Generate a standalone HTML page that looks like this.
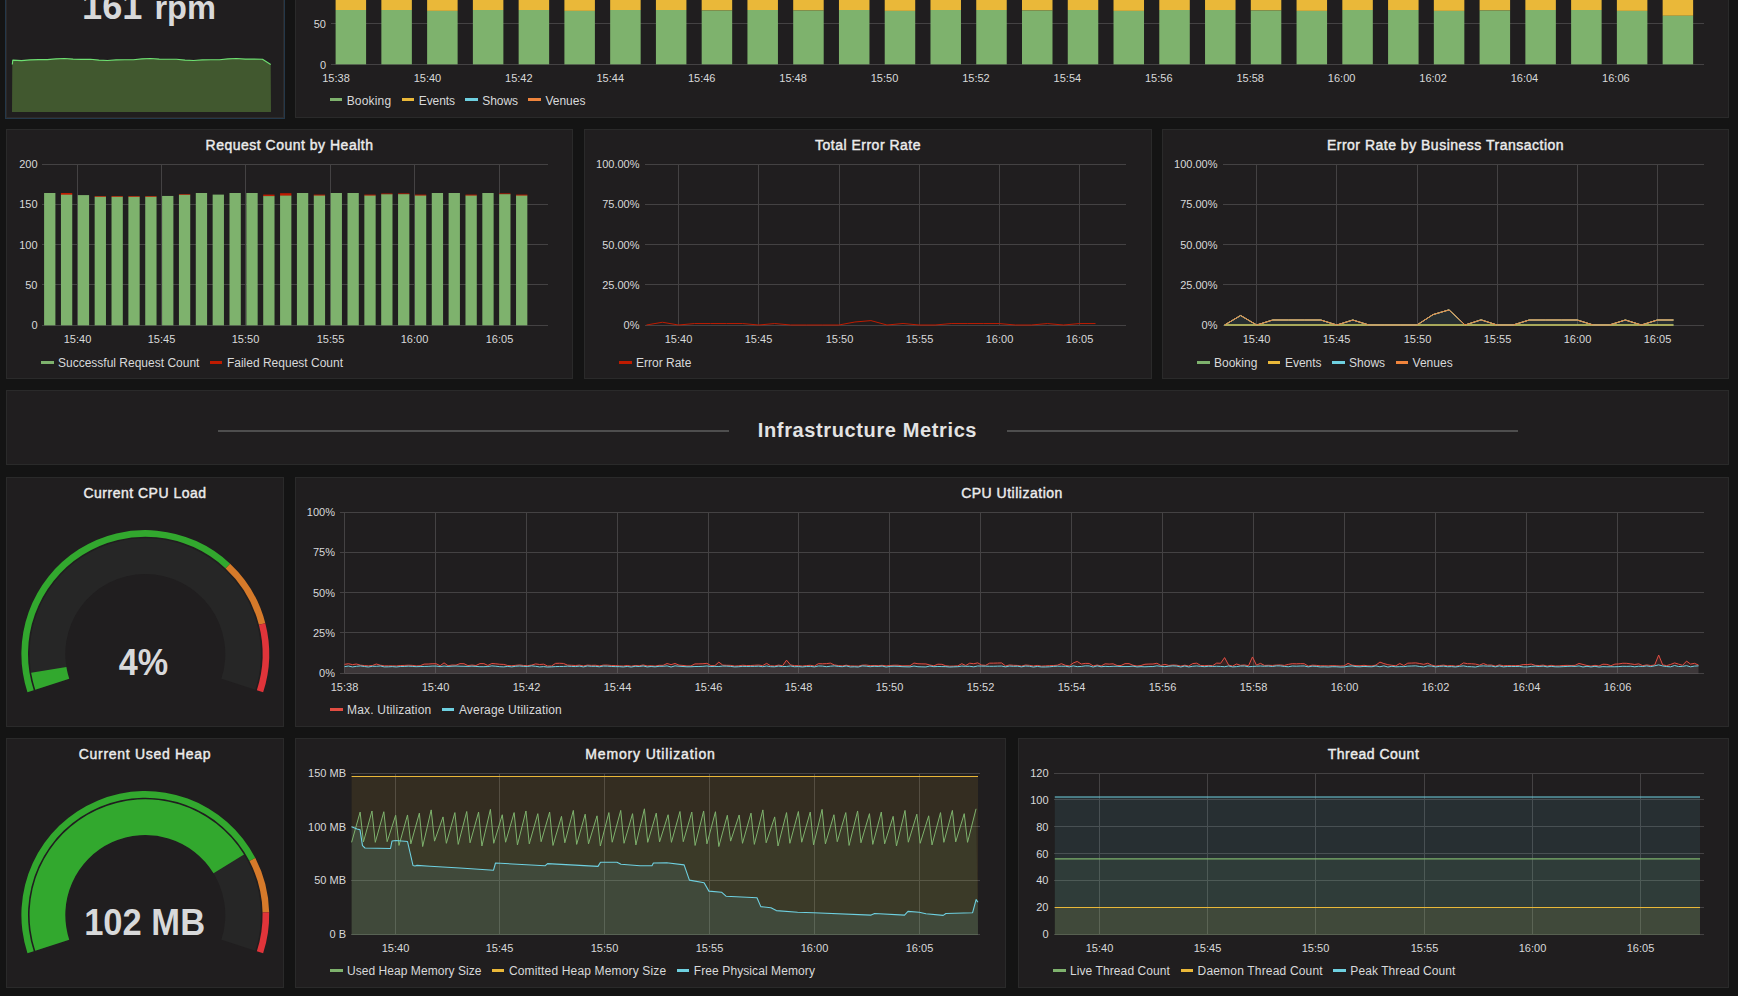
<!DOCTYPE html>
<html lang="en"><head><meta charset="utf-8"><title>Application Dashboard</title>
<style>
html,body{margin:0;padding:0;background:#141414;}
body{width:1738px;height:996px;overflow:hidden;position:relative;font-family:"Liberation Sans", Arial, sans-serif;color:#d8d9da;font-size:12px;}
.panel{position:absolute;box-sizing:border-box;background:#201e1f;border:1px solid #2a2a2a;}
.panel.hl{box-shadow:0 0 0 1px #24384a;border-color:#2d2a2a;}
.ptitle{position:absolute;left:0;right:0;top:7px;height:18px;line-height:18px;text-align:center;font-size:14px;font-weight:normal;-webkit-text-stroke:0.42px #ececec;color:#ececec;white-space:nowrap;}
svg.chart{position:absolute;left:-1px;top:-1px;overflow:hidden;}
.legend{position:absolute;white-space:nowrap;height:16px;line-height:16px;font-size:12px;color:#d8d9da;}
.legend .li{display:inline-block;margin-right:10.5px;}
.legend .li i{display:inline-block;width:12.5px;height:3px;margin-right:4.5px;vertical-align:middle;position:relative;top:-1.5px;}
.bigval{position:absolute;white-space:nowrap;font-weight:bold;color:#d8d9da;line-height:40px;height:40px;}
.bigval .v{font-size:36.2px;}
.bigval .u{font-size:32.6px;margin-left:12px;}
.infra{position:absolute;left:0;top:0;right:0;bottom:0;}
.infra h3{position:absolute;left:0;right:0;top:24px;margin:0;height:30px;line-height:30px;text-align:center;font-size:20px;letter-spacing:0.62px;font-weight:bold;color:#e3e3e3;}
.infra .hr{position:absolute;top:39px;height:2px;background:#4e4e4e;}

</style></head><body>
<div class="panel hl" style="left:6px;top:-132px;width:278px;height:250px">
<div class="ptitle" style="top:6px;letter-spacing:0.5px">Calls per Minute</div>
<svg class="chart" width="278" height="250" viewBox="6 -132 278 250" font-family='"Liberation Sans", Arial, sans-serif'>
<path d="M12.3,64.5 L12.8,60.09 L21.41,60.58 L30.02,59.92 L38.63,59.59 L47.24,59.66 L55.85,58.91 L64.46,58.43 L73.07,59.09 L81.68,59.36 L90.29,59.3 L98.9,60.1 L107.51,60.55 L116.12,59.91 L124.73,59.69 L133.34,59.73 L141.96,58.9 L150.57,58.46 L159.18,59.09 L167.79,59.26 L176.4,59.24 L185.01,60.11 L193.62,60.52 L202.23,59.9 L210.84,59.79 L219.45,59.8 L228.06,58.89 L236.67,58.51 L245.28,59.1 L253.89,59.15 L262.5,59.18 L270.7,64.5 L271,112 L12,112 Z" fill="#41582f"/>
<path d="M12.3,64.5 L12.8,60.09 L21.41,60.58 L30.02,59.92 L38.63,59.59 L47.24,59.66 L55.85,58.91 L64.46,58.43 L73.07,59.09 L81.68,59.36 L90.29,59.3 L98.9,60.1 L107.51,60.55 L116.12,59.91 L124.73,59.69 L133.34,59.73 L141.96,58.9 L150.57,58.46 L159.18,59.09 L167.79,59.26 L176.4,59.24 L185.01,60.11 L193.62,60.52 L202.23,59.9 L210.84,59.79 L219.45,59.8 L228.06,58.89 L236.67,58.51 L245.28,59.1 L253.89,59.15 L262.5,59.18 L270.7,64.5" fill="none" stroke="#6ee072" stroke-width="1.1" stroke-linejoin="round"/>
</svg>
<div class="bigval" style="left:75px;top:117.5px"><span class="v">161</span><span class="u">rpm</span></div>
</div>
<div class="panel " style="left:295px;top:-132px;width:1434px;height:250px">
<div class="ptitle" style="top:6px;letter-spacing:0.5px">Calls per Minute by Business Transaction</div>
<svg class="chart" width="1434" height="250" viewBox="295 -132 1434 250" font-family='"Liberation Sans", Arial, sans-serif'>
<rect x="331" y="23" width="1373" height="1" fill="#444243"/>
<rect x="331" y="64" width="1373" height="1" fill="#444243"/>
<rect x="335.6" y="-5" width="30.5" height="15" fill="#eab839"/>
<rect x="335.6" y="10" width="30.5" height="54.3" fill="#7eb26d"/>
<rect x="381.36" y="-5" width="30.5" height="15" fill="#eab839"/>
<rect x="381.36" y="10" width="30.5" height="54.3" fill="#7eb26d"/>
<rect x="427.12" y="-5" width="30.5" height="15.9" fill="#eab839"/>
<rect x="427.12" y="10.9" width="30.5" height="53.4" fill="#7eb26d"/>
<rect x="472.88" y="-5" width="30.5" height="15" fill="#eab839"/>
<rect x="472.88" y="10" width="30.5" height="54.3" fill="#7eb26d"/>
<rect x="518.64" y="-5" width="30.5" height="15" fill="#eab839"/>
<rect x="518.64" y="10" width="30.5" height="54.3" fill="#7eb26d"/>
<rect x="564.4" y="-5" width="30.5" height="15.9" fill="#eab839"/>
<rect x="564.4" y="10.9" width="30.5" height="53.4" fill="#7eb26d"/>
<rect x="610.16" y="-5" width="30.5" height="15" fill="#eab839"/>
<rect x="610.16" y="10" width="30.5" height="54.3" fill="#7eb26d"/>
<rect x="655.92" y="-5" width="30.5" height="15" fill="#eab839"/>
<rect x="655.92" y="10" width="30.5" height="54.3" fill="#7eb26d"/>
<rect x="701.68" y="-5" width="30.5" height="15.5" fill="#eab839"/>
<rect x="701.68" y="10.5" width="30.5" height="53.8" fill="#7eb26d"/>
<rect x="747.44" y="-5" width="30.5" height="15" fill="#eab839"/>
<rect x="747.44" y="10" width="30.5" height="54.3" fill="#7eb26d"/>
<rect x="793.2" y="-5" width="30.5" height="15.5" fill="#eab839"/>
<rect x="793.2" y="10.5" width="30.5" height="53.8" fill="#7eb26d"/>
<rect x="838.96" y="-5" width="30.5" height="15" fill="#eab839"/>
<rect x="838.96" y="10" width="30.5" height="54.3" fill="#7eb26d"/>
<rect x="884.72" y="-5" width="30.5" height="15.9" fill="#eab839"/>
<rect x="884.72" y="10.9" width="30.5" height="53.4" fill="#7eb26d"/>
<rect x="930.48" y="-5" width="30.5" height="15" fill="#eab839"/>
<rect x="930.48" y="10" width="30.5" height="54.3" fill="#7eb26d"/>
<rect x="976.24" y="-5" width="30.5" height="15" fill="#eab839"/>
<rect x="976.24" y="10" width="30.5" height="54.3" fill="#7eb26d"/>
<rect x="1022" y="-5" width="30.5" height="15.5" fill="#eab839"/>
<rect x="1022" y="10.5" width="30.5" height="53.8" fill="#7eb26d"/>
<rect x="1067.76" y="-5" width="30.5" height="15" fill="#eab839"/>
<rect x="1067.76" y="10" width="30.5" height="54.3" fill="#7eb26d"/>
<rect x="1113.52" y="-5" width="30.5" height="15.9" fill="#eab839"/>
<rect x="1113.52" y="10.9" width="30.5" height="53.4" fill="#7eb26d"/>
<rect x="1159.28" y="-5" width="30.5" height="15" fill="#eab839"/>
<rect x="1159.28" y="10" width="30.5" height="54.3" fill="#7eb26d"/>
<rect x="1205.04" y="-5" width="30.5" height="15" fill="#eab839"/>
<rect x="1205.04" y="10" width="30.5" height="54.3" fill="#7eb26d"/>
<rect x="1250.8" y="-5" width="30.5" height="15.5" fill="#eab839"/>
<rect x="1250.8" y="10.5" width="30.5" height="53.8" fill="#7eb26d"/>
<rect x="1296.56" y="-5" width="30.5" height="15.9" fill="#eab839"/>
<rect x="1296.56" y="10.9" width="30.5" height="53.4" fill="#7eb26d"/>
<rect x="1342.32" y="-5" width="30.5" height="15" fill="#eab839"/>
<rect x="1342.32" y="10" width="30.5" height="54.3" fill="#7eb26d"/>
<rect x="1388.08" y="-5" width="30.5" height="15" fill="#eab839"/>
<rect x="1388.08" y="10" width="30.5" height="54.3" fill="#7eb26d"/>
<rect x="1433.84" y="-5" width="30.5" height="15.9" fill="#eab839"/>
<rect x="1433.84" y="10.9" width="30.5" height="53.4" fill="#7eb26d"/>
<rect x="1479.6" y="-5" width="30.5" height="15.5" fill="#eab839"/>
<rect x="1479.6" y="10.5" width="30.5" height="53.8" fill="#7eb26d"/>
<rect x="1525.36" y="-5" width="30.5" height="15" fill="#eab839"/>
<rect x="1525.36" y="10" width="30.5" height="54.3" fill="#7eb26d"/>
<rect x="1571.12" y="-5" width="30.5" height="15" fill="#eab839"/>
<rect x="1571.12" y="10" width="30.5" height="54.3" fill="#7eb26d"/>
<rect x="1616.88" y="-5" width="30.5" height="15.9" fill="#eab839"/>
<rect x="1616.88" y="10.9" width="30.5" height="53.4" fill="#7eb26d"/>
<rect x="1662.64" y="-5" width="30.5" height="20.8" fill="#eab839"/>
<rect x="1662.64" y="15.8" width="30.5" height="48.5" fill="#7eb26d"/>
<text x="326" y="28.14" text-anchor="end" font-size="11" fill="#d8d9da" font-weight="normal" >50</text>
<text x="326" y="68.64" text-anchor="end" font-size="11" fill="#d8d9da" font-weight="normal" >0</text>
<text x="336" y="82.24" text-anchor="middle" font-size="11" fill="#d8d9da" font-weight="normal" >15:38</text>
<text x="427.42" y="82.24" text-anchor="middle" font-size="11" fill="#d8d9da" font-weight="normal" >15:40</text>
<text x="518.84" y="82.24" text-anchor="middle" font-size="11" fill="#d8d9da" font-weight="normal" >15:42</text>
<text x="610.26" y="82.24" text-anchor="middle" font-size="11" fill="#d8d9da" font-weight="normal" >15:44</text>
<text x="701.68" y="82.24" text-anchor="middle" font-size="11" fill="#d8d9da" font-weight="normal" >15:46</text>
<text x="793.1" y="82.24" text-anchor="middle" font-size="11" fill="#d8d9da" font-weight="normal" >15:48</text>
<text x="884.52" y="82.24" text-anchor="middle" font-size="11" fill="#d8d9da" font-weight="normal" >15:50</text>
<text x="975.94" y="82.24" text-anchor="middle" font-size="11" fill="#d8d9da" font-weight="normal" >15:52</text>
<text x="1067.36" y="82.24" text-anchor="middle" font-size="11" fill="#d8d9da" font-weight="normal" >15:54</text>
<text x="1158.78" y="82.24" text-anchor="middle" font-size="11" fill="#d8d9da" font-weight="normal" >15:56</text>
<text x="1250.2" y="82.24" text-anchor="middle" font-size="11" fill="#d8d9da" font-weight="normal" >15:58</text>
<text x="1341.62" y="82.24" text-anchor="middle" font-size="11" fill="#d8d9da" font-weight="normal" >16:00</text>
<text x="1433.04" y="82.24" text-anchor="middle" font-size="11" fill="#d8d9da" font-weight="normal" >16:02</text>
<text x="1524.46" y="82.24" text-anchor="middle" font-size="11" fill="#d8d9da" font-weight="normal" >16:04</text>
<text x="1615.88" y="82.24" text-anchor="middle" font-size="11" fill="#d8d9da" font-weight="normal" >16:06</text>
</svg>
<div class="legend" style="left:33.7px;top:223.5px"><span class="li" style="letter-spacing:0.17px"><i style="background:#7eb26d"></i>Booking</span><span class="li" style="letter-spacing:-0.1px"><i style="background:#eab839"></i>Events</span><span class="li" style="letter-spacing:-0.1px"><i style="background:#6ed0e0"></i>Shows</span><span class="li"><i style="background:#ef843c"></i>Venues</span></div>
</div>
<div class="panel " style="left:6px;top:129px;width:567px;height:250px">
<div class="ptitle" style="top:6px;letter-spacing:0.5px">Request Count by Health</div>
<svg class="chart" width="567" height="250" viewBox="6 129 567 250" font-family='"Liberation Sans", Arial, sans-serif'>
<rect x="42" y="164" width="506" height="1" fill="#444243"/>
<rect x="42" y="204" width="506" height="1" fill="#444243"/>
<rect x="42" y="244" width="506" height="1" fill="#444243"/>
<rect x="42" y="284" width="506" height="1" fill="#444243"/>
<rect x="42" y="325" width="506" height="1" fill="#444243"/>
<rect x="77" y="164" width="1" height="161" fill="#444243"/>
<rect x="161" y="164" width="1" height="161" fill="#444243"/>
<rect x="245" y="164" width="1" height="161" fill="#444243"/>
<rect x="330" y="164" width="1" height="161" fill="#444243"/>
<rect x="414" y="164" width="1" height="161" fill="#444243"/>
<rect x="499" y="164" width="1" height="161" fill="#444243"/>
<rect x="44.1" y="193" width="11.3" height="132.3" fill="#7eb26d"/>
<rect x="60.95" y="193" width="11.3" height="2" fill="#bf1b00"/>
<rect x="60.95" y="194.7" width="11.3" height="130.6" fill="#7eb26d"/>
<rect x="77.81" y="195.1" width="11.3" height="130.2" fill="#7eb26d"/>
<rect x="94.66" y="196.1" width="11.3" height="1" fill="#bf1b00"/>
<rect x="94.66" y="196.8" width="11.3" height="128.5" fill="#7eb26d"/>
<rect x="111.52" y="196.1" width="11.3" height="1" fill="#bf1b00"/>
<rect x="111.52" y="196.8" width="11.3" height="128.5" fill="#7eb26d"/>
<rect x="128.38" y="196.1" width="11.3" height="1" fill="#bf1b00"/>
<rect x="128.38" y="196.8" width="11.3" height="128.5" fill="#7eb26d"/>
<rect x="145.23" y="196.1" width="11.3" height="1" fill="#bf1b00"/>
<rect x="145.23" y="196.8" width="11.3" height="128.5" fill="#7eb26d"/>
<rect x="162.09" y="195.95" width="11.3" height="129.35" fill="#7eb26d"/>
<rect x="178.94" y="194.2" width="11.3" height="0.9" fill="#bf1b00"/>
<rect x="178.94" y="194.8" width="11.3" height="130.5" fill="#7eb26d"/>
<rect x="195.79" y="193" width="11.3" height="132.3" fill="#7eb26d"/>
<rect x="212.65" y="194.6" width="11.3" height="130.7" fill="#7eb26d"/>
<rect x="229.5" y="193" width="11.3" height="132.3" fill="#7eb26d"/>
<rect x="246.36" y="193" width="11.3" height="132.3" fill="#7eb26d"/>
<rect x="263.22" y="194.6" width="11.3" height="1.8" fill="#bf1b00"/>
<rect x="263.22" y="196.1" width="11.3" height="129.2" fill="#7eb26d"/>
<rect x="280.07" y="193.2" width="11.3" height="2.7" fill="#bf1b00"/>
<rect x="280.07" y="195.6" width="11.3" height="129.7" fill="#7eb26d"/>
<rect x="296.93" y="193" width="11.3" height="132.3" fill="#7eb26d"/>
<rect x="313.78" y="194.6" width="11.3" height="1.3" fill="#bf1b00"/>
<rect x="313.78" y="195.6" width="11.3" height="129.7" fill="#7eb26d"/>
<rect x="330.64" y="193" width="11.3" height="132.3" fill="#7eb26d"/>
<rect x="347.49" y="193" width="11.3" height="132.3" fill="#7eb26d"/>
<rect x="364.35" y="194.6" width="11.3" height="1.3" fill="#bf1b00"/>
<rect x="364.35" y="195.6" width="11.3" height="129.7" fill="#7eb26d"/>
<rect x="381.2" y="193.5" width="11.3" height="1.1" fill="#bf1b00"/>
<rect x="381.2" y="194.3" width="11.3" height="131" fill="#7eb26d"/>
<rect x="398.06" y="193.4" width="11.3" height="1.1" fill="#bf1b00"/>
<rect x="398.06" y="194.2" width="11.3" height="131.1" fill="#7eb26d"/>
<rect x="414.91" y="194.6" width="11.3" height="1.3" fill="#bf1b00"/>
<rect x="414.91" y="195.6" width="11.3" height="129.7" fill="#7eb26d"/>
<rect x="431.77" y="193" width="11.3" height="132.3" fill="#7eb26d"/>
<rect x="448.62" y="193" width="11.3" height="132.3" fill="#7eb26d"/>
<rect x="465.48" y="194.6" width="11.3" height="1.3" fill="#bf1b00"/>
<rect x="465.48" y="195.6" width="11.3" height="129.7" fill="#7eb26d"/>
<rect x="482.33" y="193" width="11.3" height="132.3" fill="#7eb26d"/>
<rect x="499.19" y="193.4" width="11.3" height="1.1" fill="#bf1b00"/>
<rect x="499.19" y="194.2" width="11.3" height="131.1" fill="#7eb26d"/>
<rect x="516.04" y="194.6" width="11.3" height="1.3" fill="#bf1b00"/>
<rect x="516.04" y="195.6" width="11.3" height="129.7" fill="#7eb26d"/>
<text x="37.5" y="168.04" text-anchor="end" font-size="11" fill="#d8d9da" font-weight="normal" >200</text>
<text x="37.5" y="208.29" text-anchor="end" font-size="11" fill="#d8d9da" font-weight="normal" >150</text>
<text x="37.5" y="248.54" text-anchor="end" font-size="11" fill="#d8d9da" font-weight="normal" >100</text>
<text x="37.5" y="288.79" text-anchor="end" font-size="11" fill="#d8d9da" font-weight="normal" >50</text>
<text x="37.5" y="329.04" text-anchor="end" font-size="11" fill="#d8d9da" font-weight="normal" >0</text>
<text x="77.5" y="343.44" text-anchor="middle" font-size="11" fill="#d8d9da" font-weight="normal" >15:40</text>
<text x="161.5" y="343.44" text-anchor="middle" font-size="11" fill="#d8d9da" font-weight="normal" >15:45</text>
<text x="245.5" y="343.44" text-anchor="middle" font-size="11" fill="#d8d9da" font-weight="normal" >15:50</text>
<text x="330.5" y="343.44" text-anchor="middle" font-size="11" fill="#d8d9da" font-weight="normal" >15:55</text>
<text x="414.5" y="343.44" text-anchor="middle" font-size="11" fill="#d8d9da" font-weight="normal" >16:00</text>
<text x="499.5" y="343.44" text-anchor="middle" font-size="11" fill="#d8d9da" font-weight="normal" >16:05</text>
</svg>
<div class="legend" style="left:34px;top:225px"><span class="li"><i style="background:#7eb26d"></i>Successful Request Count</span><span class="li"><i style="background:#bf1b00"></i>Failed Request Count</span></div>
</div>
<div class="panel " style="left:584px;top:129px;width:568px;height:250px">
<div class="ptitle" style="top:6px;letter-spacing:0.5px">Total Error Rate</div>
<svg class="chart" width="568" height="250" viewBox="584 129 568 250" font-family='"Liberation Sans", Arial, sans-serif'>
<rect x="645" y="164" width="481" height="1" fill="#444243"/>
<rect x="645" y="204" width="481" height="1" fill="#444243"/>
<rect x="645" y="244" width="481" height="1" fill="#444243"/>
<rect x="645" y="284" width="481" height="1" fill="#444243"/>
<rect x="645" y="325" width="481" height="1" fill="#444243"/>
<rect x="678" y="164" width="1" height="161" fill="#444243"/>
<rect x="758" y="164" width="1" height="161" fill="#444243"/>
<rect x="839" y="164" width="1" height="161" fill="#444243"/>
<rect x="919" y="164" width="1" height="161" fill="#444243"/>
<rect x="999" y="164" width="1" height="161" fill="#444243"/>
<rect x="1079" y="164" width="1" height="161" fill="#444243"/>
<path d="M646.4,325 L662.44,322.25 L678.48,325 L694.52,323.55 L710.56,323.55 L726.6,323.55 L742.64,323.55 L758.68,325 L774.72,323.55 L790.76,325 L806.8,325 L822.84,325 L838.88,325 L854.92,321.99 L870.96,320.61 L887,325 L903.04,323.51 L919.08,325 L935.12,325 L951.16,323.55 L967.2,323.55 L983.24,323.55 L999.28,323.55 L1015.32,325 L1031.36,325 L1047.4,323.55 L1063.44,325 L1079.48,323.55 L1095.52,323.55" fill="none" stroke="#bf1b00" stroke-width="1"/>
<text x="639.5" y="168.04" text-anchor="end" font-size="11" fill="#d8d9da" font-weight="normal" >100.00%</text>
<text x="639.5" y="208.29" text-anchor="end" font-size="11" fill="#d8d9da" font-weight="normal" >75.00%</text>
<text x="639.5" y="248.54" text-anchor="end" font-size="11" fill="#d8d9da" font-weight="normal" >50.00%</text>
<text x="639.5" y="288.79" text-anchor="end" font-size="11" fill="#d8d9da" font-weight="normal" >25.00%</text>
<text x="639.5" y="329.04" text-anchor="end" font-size="11" fill="#d8d9da" font-weight="normal" >0%</text>
<text x="678.5" y="343.44" text-anchor="middle" font-size="11" fill="#d8d9da" font-weight="normal" >15:40</text>
<text x="758.5" y="343.44" text-anchor="middle" font-size="11" fill="#d8d9da" font-weight="normal" >15:45</text>
<text x="839.5" y="343.44" text-anchor="middle" font-size="11" fill="#d8d9da" font-weight="normal" >15:50</text>
<text x="919.5" y="343.44" text-anchor="middle" font-size="11" fill="#d8d9da" font-weight="normal" >15:55</text>
<text x="999.5" y="343.44" text-anchor="middle" font-size="11" fill="#d8d9da" font-weight="normal" >16:00</text>
<text x="1079.5" y="343.44" text-anchor="middle" font-size="11" fill="#d8d9da" font-weight="normal" >16:05</text>
</svg>
<div class="legend" style="left:34px;top:225px"><span class="li"><i style="background:#bf1b00"></i>Error Rate</span></div>
</div>
<div class="panel " style="left:1162px;top:129px;width:567px;height:250px">
<div class="ptitle" style="top:6px;letter-spacing:0.5px">Error Rate by Business Transaction</div>
<svg class="chart" width="567" height="250" viewBox="1162 129 567 250" font-family='"Liberation Sans", Arial, sans-serif'>
<rect x="1223" y="164" width="481" height="1" fill="#444243"/>
<rect x="1223" y="204" width="481" height="1" fill="#444243"/>
<rect x="1223" y="244" width="481" height="1" fill="#444243"/>
<rect x="1223" y="284" width="481" height="1" fill="#444243"/>
<rect x="1223" y="325" width="481" height="1" fill="#444243"/>
<rect x="1256" y="164" width="1" height="161" fill="#444243"/>
<rect x="1336" y="164" width="1" height="161" fill="#444243"/>
<rect x="1417" y="164" width="1" height="161" fill="#444243"/>
<rect x="1497" y="164" width="1" height="161" fill="#444243"/>
<rect x="1577" y="164" width="1" height="161" fill="#444243"/>
<rect x="1657" y="164" width="1" height="161" fill="#444243"/>
<path d="M1224.6,325 L1240.63,315.5 L1256.66,325 L1272.69,320.01 L1288.72,320.01 L1304.75,320.01 L1320.78,320.01 L1336.81,325 L1352.84,320.01 L1368.87,325 L1384.9,325 L1400.93,325 L1416.96,325 L1432.99,314.62 L1449.02,309.87 L1465.05,325 L1481.08,319.85 L1497.11,325 L1513.14,325 L1529.17,320.01 L1545.2,320.01 L1561.23,320.01 L1577.26,320.01 L1593.29,325 L1609.32,325 L1625.35,320.01 L1641.38,325 L1657.41,320.01 L1673.44,320.01 L1673.44,325 L1224.6,325 Z" fill="rgba(110,208,224,0.09)"/>
<path d="M1224.6,325 L1673.44,325" stroke="#6ed0e0" stroke-width="1"/>
<path d="M1224.6,325 L1673.44,325" stroke="#7eb26d" stroke-width="1"/>
<path d="M1224.6,325 L1673.44,325" stroke="#eab839" stroke-width="1"/>
<path d="M1224.6,325 L1240.63,315.5 L1256.66,325 L1272.69,320.01 L1288.72,320.01 L1304.75,320.01 L1320.78,320.01 L1336.81,325 L1352.84,320.01 L1368.87,325 L1384.9,325 L1400.93,325 L1416.96,325 L1432.99,314.62 L1449.02,309.87 L1465.05,325 L1481.08,319.85 L1497.11,325 L1513.14,325 L1529.17,320.01 L1545.2,320.01 L1561.23,320.01 L1577.26,320.01 L1593.29,325 L1609.32,325 L1625.35,320.01 L1641.38,325 L1657.41,320.01 L1673.44,320.01" fill="none" stroke="#7eb26d" stroke-width="1"/>
<path d="M1224.6,325 L1240.63,315.5 L1256.66,325 L1272.69,320.01 L1288.72,320.01 L1304.75,320.01 L1320.78,320.01 L1336.81,325 L1352.84,320.01 L1368.87,325 L1384.9,325 L1400.93,325 L1416.96,325 L1432.99,314.62 L1449.02,309.87 L1465.05,325 L1481.08,319.85 L1497.11,325 L1513.14,325 L1529.17,320.01 L1545.2,320.01 L1561.23,320.01 L1577.26,320.01 L1593.29,325 L1609.32,325 L1625.35,320.01 L1641.38,325 L1657.41,320.01 L1673.44,320.01" fill="none" stroke="#eab839" stroke-width="1"/>
<path d="M1224.6,325 L1240.63,315.5 L1256.66,325 L1272.69,320.01 L1288.72,320.01 L1304.75,320.01 L1320.78,320.01 L1336.81,325 L1352.84,320.01 L1368.87,325 L1384.9,325 L1400.93,325 L1416.96,325 L1432.99,314.62 L1449.02,309.87 L1465.05,325 L1481.08,319.85 L1497.11,325 L1513.14,325 L1529.17,320.01 L1545.2,320.01 L1561.23,320.01 L1577.26,320.01 L1593.29,325 L1609.32,325 L1625.35,320.01 L1641.38,325 L1657.41,320.01 L1673.44,320.01" fill="none" stroke="#6ed0e0" stroke-width="1"/>
<path d="M1224.6,325 L1240.63,315.5 L1256.66,325 L1272.69,320.01 L1288.72,320.01 L1304.75,320.01 L1320.78,320.01 L1336.81,325 L1352.84,320.01 L1368.87,325 L1384.9,325 L1400.93,325 L1416.96,325 L1432.99,314.62 L1449.02,309.87 L1465.05,325 L1481.08,319.85 L1497.11,325 L1513.14,325 L1529.17,320.01 L1545.2,320.01 L1561.23,320.01 L1577.26,320.01 L1593.29,325 L1609.32,325 L1625.35,320.01 L1641.38,325 L1657.41,320.01 L1673.44,320.01" fill="none" stroke="#ef843c" stroke-width="1"/>
<text x="1217.5" y="168.04" text-anchor="end" font-size="11" fill="#d8d9da" font-weight="normal" >100.00%</text>
<text x="1217.5" y="208.29" text-anchor="end" font-size="11" fill="#d8d9da" font-weight="normal" >75.00%</text>
<text x="1217.5" y="248.54" text-anchor="end" font-size="11" fill="#d8d9da" font-weight="normal" >50.00%</text>
<text x="1217.5" y="288.79" text-anchor="end" font-size="11" fill="#d8d9da" font-weight="normal" >25.00%</text>
<text x="1217.5" y="329.04" text-anchor="end" font-size="11" fill="#d8d9da" font-weight="normal" >0%</text>
<text x="1256.5" y="343.44" text-anchor="middle" font-size="11" fill="#d8d9da" font-weight="normal" >15:40</text>
<text x="1336.5" y="343.44" text-anchor="middle" font-size="11" fill="#d8d9da" font-weight="normal" >15:45</text>
<text x="1417.5" y="343.44" text-anchor="middle" font-size="11" fill="#d8d9da" font-weight="normal" >15:50</text>
<text x="1497.5" y="343.44" text-anchor="middle" font-size="11" fill="#d8d9da" font-weight="normal" >15:55</text>
<text x="1577.5" y="343.44" text-anchor="middle" font-size="11" fill="#d8d9da" font-weight="normal" >16:00</text>
<text x="1657.5" y="343.44" text-anchor="middle" font-size="11" fill="#d8d9da" font-weight="normal" >16:05</text>
</svg>
<div class="legend" style="left:34px;top:225px"><span class="li"><i style="background:#7eb26d"></i>Booking</span><span class="li"><i style="background:#eab839"></i>Events</span><span class="li"><i style="background:#6ed0e0"></i>Shows</span><span class="li"><i style="background:#ef843c"></i>Venues</span></div>
</div>
<div class="panel textpanel" style="left:6px;top:390px;width:1723px;height:75px">
<div class="infra"><span class="hr" style="left:211px;width:511px"></span><h3>Infrastructure Metrics</h3><span class="hr" style="left:1000px;width:511px"></span></div>
</div>
<div class="panel " style="left:6px;top:477px;width:278px;height:250px">
<div class="ptitle" style="top:6px;letter-spacing:0.5px">Current CPU Load</div>
<svg class="chart" width="278" height="250" viewBox="6 477 278 250" font-family='"Liberation Sans", Arial, sans-serif'>
<path d="M35.26,689.75 A115.7,115.7 0 1 1 255.34,689.75 L221.38,678.72 A80.0,80.0 0 1 0 69.22,678.72 Z" fill="#262626"/>
<path d="M35.26,689.75 A115.7,115.7 0 0 1 31.14,672.82 L66.37,667.01 A80.0,80.0 0 0 0 69.22,678.72 Z" fill="#32a82e"/>
<path d="M27.46,692.29 A123.9,123.9 0 0 1 230.12,563.68 L225.6,568.49 A117.3,117.3 0 0 0 33.74,690.25 Z" fill="#32a82e"/>
<path d="M230.12,563.68 A123.9,123.9 0 0 1 265.31,623.19 L258.91,624.83 A117.3,117.3 0 0 0 225.6,568.49 Z" fill="#d67a2a"/>
<path d="M265.31,623.19 A123.9,123.9 0 0 1 263.14,692.29 L256.86,690.25 A117.3,117.3 0 0 0 258.91,624.83 Z" fill="#e0343a"/>
<text transform="translate(143.4,675) scale(0.935,1)" x="0" y="0" text-anchor="middle" font-size="36.6" font-weight="bold" fill="#d8d9da">4%</text>
</svg>
</div>
<div class="panel " style="left:295px;top:477px;width:1434px;height:250px">
<div class="ptitle" style="top:6px;letter-spacing:0.5px">CPU Utilization</div>
<svg class="chart" width="1434" height="250" viewBox="295 477 1434 250" font-family='"Liberation Sans", Arial, sans-serif'>
<rect x="340" y="512" width="1364" height="1" fill="#444243"/>
<rect x="340" y="552" width="1364" height="1" fill="#444243"/>
<rect x="340" y="592" width="1364" height="1" fill="#444243"/>
<rect x="340" y="632" width="1364" height="1" fill="#444243"/>
<rect x="340" y="673" width="1364" height="1" fill="#444243"/>
<rect x="344" y="512" width="1" height="161" fill="#444243"/>
<rect x="435" y="512" width="1" height="161" fill="#444243"/>
<rect x="526" y="512" width="1" height="161" fill="#444243"/>
<rect x="617" y="512" width="1" height="161" fill="#444243"/>
<rect x="708" y="512" width="1" height="161" fill="#444243"/>
<rect x="798" y="512" width="1" height="161" fill="#444243"/>
<rect x="889" y="512" width="1" height="161" fill="#444243"/>
<rect x="980" y="512" width="1" height="161" fill="#444243"/>
<rect x="1071" y="512" width="1" height="161" fill="#444243"/>
<rect x="1162" y="512" width="1" height="161" fill="#444243"/>
<rect x="1253" y="512" width="1" height="161" fill="#444243"/>
<rect x="1344" y="512" width="1" height="161" fill="#444243"/>
<rect x="1435" y="512" width="1" height="161" fill="#444243"/>
<rect x="1526" y="512" width="1" height="161" fill="#444243"/>
<rect x="1617" y="512" width="1" height="161" fill="#444243"/>
<path d="M344.5,664.33 L348.48,663.73 L352.46,664.61 L356.45,664.02 L360.43,665.17 L364.41,665.57 L368.39,665.85 L372.38,665.51 L376.36,664.02 L380.34,665.21 L384.32,665.83 L388.31,665.83 L392.29,665.83 L396.27,665.96 L400.25,665.55 L404.24,665.43 L408.22,665.23 L412.2,665.37 L416.18,665.91 L420.16,665.74 L424.15,664.1 L428.13,664.02 L432.11,663.74 L436.09,663.71 L440.08,665.69 L444.06,662.89 L448.04,665.7 L452.02,665.05 L456.01,665.15 L459.99,663.62 L463.97,663.69 L467.95,665.59 L471.94,665.04 L475.92,665.54 L479.9,663.6 L483.88,663.6 L487.86,665.44 L491.85,663.47 L495.83,663.8 L499.81,664.25 L503.79,664.42 L507.78,665.53 L511.76,665.77 L515.74,665.33 L519.72,664.97 L523.71,665.47 L527.69,665.64 L531.67,665.07 L535.65,663.9 L539.64,664.5 L543.62,664.18 L547.6,666.02 L551.58,665.98 L555.56,663.37 L559.55,663.25 L563.53,663.46 L567.51,665.13 L571.49,665.29 L575.48,665.5 L579.46,665.13 L583.44,665.98 L587.42,665.11 L591.41,665.39 L595.39,665.26 L599.37,665.91 L603.35,665.13 L607.34,665.1 L611.32,665.49 L615.3,665.59 L619.28,665.85 L623.26,666.04 L627.25,665.47 L631.23,666.16 L635.21,665.48 L639.19,665.75 L643.18,664.97 L647.16,665.91 L651.14,665.71 L655.12,666.1 L659.11,665.32 L663.09,665.37 L667.07,663.51 L671.05,664.63 L675.04,663.47 L679.02,665.14 L683,665.44 L686.98,665.93 L690.96,665.91 L694.95,663.92 L698.93,663.87 L702.91,663.72 L706.89,663.33 L710.88,665.59 L714.86,665.65 L718.84,662.11 L722.82,665.15 L726.81,665.29 L730.79,665.36 L734.77,666.07 L738.75,665.76 L742.74,665.26 L746.72,665.56 L750.7,665.5 L754.68,665.28 L758.66,665.08 L762.65,665.61 L766.63,663.37 L770.61,665.75 L774.59,666 L778.58,665.1 L782.56,665.8 L786.54,660.17 L790.52,664.96 L794.51,665.63 L798.49,665.67 L802.47,666.05 L806.45,665.59 L810.44,665.29 L814.42,666.07 L818.4,663.67 L822.38,663.79 L826.36,663.62 L830.35,663.13 L834.33,664.94 L838.31,665.55 L842.29,665.89 L846.28,665.21 L850.26,665.95 L854.24,665.98 L858.22,666.12 L862.21,665.18 L866.19,665.05 L870.17,665.61 L874.15,665.46 L878.14,665.65 L882.12,665.32 L886.1,665.89 L890.08,665.5 L894.06,665.24 L898.05,665.25 L902.03,665.84 L906.01,665.77 L909.99,665.74 L913.98,663.04 L917.96,663.74 L921.94,663.86 L925.92,663.95 L929.91,665.01 L933.89,665.84 L937.87,664.21 L941.85,664.33 L945.84,665.77 L949.82,666.17 L953.8,666.05 L957.78,665.87 L961.76,663.69 L965.75,665.47 L969.73,663.18 L973.71,663.76 L977.69,662.86 L981.68,665.05 L985.66,665.32 L989.64,663.16 L993.62,663.15 L997.61,663.02 L1001.59,662.92 L1005.57,665.93 L1009.55,664.96 L1013.54,665.32 L1017.52,665.45 L1021.5,666.1 L1025.48,665.04 L1029.46,665.35 L1033.45,666 L1037.43,665.43 L1041.41,666.12 L1045.39,665.92 L1049.38,665.66 L1053.36,665.51 L1057.34,665.23 L1061.32,663.67 L1065.31,665.26 L1069.29,665.95 L1073.27,662.94 L1077.25,661.46 L1081.24,664.01 L1085.22,663.39 L1089.2,663.44 L1093.18,665.95 L1097.16,665.02 L1101.15,665.96 L1105.13,663.81 L1109.11,664.08 L1113.09,663.79 L1117.08,665.49 L1121.06,665.51 L1125.04,663.63 L1129.02,663.62 L1133.01,665.27 L1136.99,666.03 L1140.97,665.51 L1144.95,664.25 L1148.94,664.04 L1152.92,664.01 L1156.9,663.28 L1160.88,665.42 L1164.86,664.39 L1168.85,665.44 L1172.83,665 L1176.81,665.19 L1180.79,666.11 L1184.78,665.16 L1188.76,666.04 L1192.74,663.56 L1196.72,663.2 L1200.71,665.47 L1204.69,665.66 L1208.67,665.42 L1212.65,665.67 L1216.64,663.12 L1220.62,663.29 L1224.6,657.59 L1228.58,665.03 L1232.56,666.1 L1236.55,664 L1240.53,665.32 L1244.51,664.95 L1248.49,665.75 L1252.48,656.95 L1256.46,665.15 L1260.44,663.37 L1264.42,665.4 L1268.41,665.27 L1272.39,665.46 L1276.37,665.1 L1280.35,664.96 L1284.34,665.42 L1288.32,664.39 L1292.3,663.67 L1296.28,663.82 L1300.26,663.64 L1304.25,663.69 L1308.23,666.14 L1312.21,665.19 L1316.19,665.36 L1320.18,665.8 L1324.16,665.75 L1328.14,665.9 L1332.12,665.63 L1336.11,665.79 L1340.09,666.01 L1344.07,665.88 L1348.05,663.34 L1352.04,665.17 L1356.02,665.62 L1360,665.77 L1363.98,665.3 L1367.96,665.83 L1371.95,665.92 L1375.93,665.08 L1379.91,662.11 L1383.89,663.57 L1387.88,664.69 L1391.86,665.3 L1395.84,665.79 L1399.82,663.49 L1403.81,665.53 L1407.79,663.17 L1411.77,663.05 L1415.75,662.88 L1419.74,663.53 L1423.72,664.3 L1427.7,663.25 L1431.68,665.05 L1435.66,666.12 L1439.65,665.52 L1443.63,665.16 L1447.61,665.84 L1451.59,665.52 L1455.58,666.2 L1459.56,665.44 L1463.54,662.92 L1467.52,663.69 L1471.51,663.74 L1475.49,664.07 L1479.47,665.13 L1483.45,663.53 L1487.44,665.12 L1491.42,665.02 L1495.4,666.14 L1499.38,664.9 L1503.36,665.77 L1507.35,665.51 L1511.33,665.62 L1515.31,665.62 L1519.29,665.47 L1523.28,664.56 L1527.26,664.57 L1531.24,664.09 L1535.22,665.35 L1539.21,665.53 L1543.19,665.13 L1547.17,666.04 L1551.15,665.32 L1555.14,665.96 L1559.12,665.88 L1563.1,665.51 L1567.08,665.36 L1571.06,665.47 L1575.05,665.39 L1579.03,663.44 L1583.01,664.48 L1586.99,665.5 L1590.98,666.14 L1594.96,665.31 L1598.94,666.01 L1602.92,664.21 L1606.91,664.39 L1610.89,665.73 L1614.87,664.13 L1618.85,663.92 L1622.84,663.25 L1626.82,663.34 L1630.8,663.88 L1634.78,664.48 L1638.76,663.84 L1642.75,665.68 L1646.73,664.92 L1650.71,665.52 L1654.69,665.02 L1658.68,655.01 L1662.66,664.88 L1666.64,665.63 L1670.62,664.44 L1674.61,662.92 L1678.59,664.15 L1682.57,665.31 L1686.55,661.14 L1690.54,664.09 L1694.52,663.32 L1698.5,665.08 L1698.5,673.5 L344.5,673.5 Z" fill="rgba(226,77,66,0.12)"/>
<path d="M344.5,666.64 L348.48,666.04 L352.46,666.91 L356.45,666.32 L360.43,665.93 L364.41,666.52 L368.39,666.96 L372.38,666.27 L376.36,666.32 L380.34,665.99 L384.32,666.89 L388.31,666.81 L392.29,666.58 L396.27,666.96 L400.25,666.51 L404.24,666.48 L408.22,666.18 L412.2,666.39 L416.18,666.68 L420.16,666.52 L424.15,666.44 L428.13,666.35 L432.11,666.07 L436.09,666.04 L440.08,666.62 L444.06,666.06 L448.04,666.46 L452.02,666.18 L456.01,666.03 L459.99,666.22 L463.97,666.29 L467.95,666.43 L471.94,666.14 L475.92,666.43 L479.9,666.69 L483.88,666.69 L487.86,666.53 L491.85,665.87 L495.83,666.23 L499.81,666.69 L503.79,666.85 L507.78,666.38 L511.76,666.88 L515.74,666.24 L519.72,665.97 L523.71,666.35 L527.69,666.45 L531.67,665.84 L535.65,666.3 L539.64,666.91 L543.62,666.59 L547.6,667 L551.58,666.85 L555.56,666.59 L559.55,666.46 L563.53,666.44 L567.51,666.13 L571.49,666.4 L575.48,666.59 L579.46,666.11 L583.44,666.92 L587.42,665.93 L591.41,666.37 L595.39,666.29 L599.37,666.79 L603.35,666.06 L607.34,666.14 L611.32,666.46 L615.3,666.61 L619.28,666.61 L623.26,666.91 L627.25,666.44 L631.23,667.03 L635.21,666.25 L639.19,666.56 L643.18,665.95 L647.16,666.92 L651.14,666.47 L655.12,666.84 L659.11,666.31 L663.09,666.29 L667.07,665.89 L671.05,667.01 L675.04,665.85 L679.02,666.24 L683,666.5 L686.98,666.77 L690.96,666.74 L694.95,666.52 L698.93,666.47 L702.91,666.32 L706.89,665.93 L710.88,666.52 L714.86,666.39 L718.84,666.5 L722.82,666.06 L726.81,666.15 L730.79,666.4 L734.77,666.9 L738.75,666.69 L742.74,666.35 L746.72,666.49 L750.7,666.41 L754.68,666.38 L758.66,666.18 L762.65,666.71 L766.63,666.01 L770.61,666.65 L774.59,666.77 L778.58,666.09 L782.56,666.59 L786.54,666.46 L790.52,665.96 L794.51,666.76 L798.49,666.54 L802.47,666.92 L806.45,666.47 L810.44,666.4 L814.42,666.89 L818.4,665.97 L822.38,666.09 L826.36,666.7 L830.35,666.21 L834.33,665.88 L838.31,666.41 L842.29,666.69 L846.28,665.95 L850.26,666.92 L854.24,666.76 L858.22,667.01 L862.21,665.92 L866.19,666.17 L870.17,666.71 L874.15,666.27 L878.14,666.49 L882.12,666.06 L886.1,667.01 L890.08,666.41 L894.06,666.23 L898.05,666.37 L902.03,666.66 L906.01,666.79 L909.99,666.86 L913.98,666.02 L917.96,666.72 L921.94,666.83 L925.92,666.93 L929.91,666.01 L933.89,666.69 L937.87,666.47 L941.85,666.59 L945.84,666.63 L949.82,666.99 L953.8,666.81 L957.78,666.69 L961.76,666.09 L965.75,666.32 L969.73,666.27 L973.71,666.84 L977.69,665.95 L981.68,666.08 L985.66,666.16 L989.64,666.28 L993.62,666.27 L997.61,666.14 L1001.59,666.05 L1005.57,666.86 L1009.55,666.02 L1013.54,666.32 L1017.52,666.19 L1021.5,666.87 L1025.48,666.02 L1029.46,666.27 L1033.45,667.02 L1037.43,666.42 L1041.41,666.95 L1045.39,666.94 L1049.38,666.78 L1053.36,666.43 L1057.34,666.2 L1061.32,666.25 L1065.31,666.24 L1069.29,666.87 L1073.27,665.85 L1077.25,666.68 L1081.24,666.46 L1085.22,665.85 L1089.2,665.9 L1093.18,667.01 L1097.16,665.86 L1101.15,666.77 L1105.13,666.33 L1109.11,666.59 L1113.09,666.3 L1117.08,666.26 L1121.06,666.59 L1125.04,666.55 L1129.02,666.54 L1133.01,666.15 L1136.99,666.88 L1140.97,666.62 L1144.95,666.79 L1148.94,666.58 L1152.92,666.55 L1156.9,665.82 L1160.88,666.32 L1164.86,666.7 L1168.85,666.23 L1172.83,665.85 L1176.81,666.09 L1180.79,666.99 L1184.78,665.97 L1188.76,666.93 L1192.74,666.28 L1196.72,665.93 L1200.71,666.36 L1204.69,666.69 L1208.67,666.24 L1212.65,666.44 L1216.64,666.25 L1220.62,666.43 L1224.6,666.76 L1228.58,665.93 L1232.56,666.86 L1236.55,666.61 L1240.53,666.05 L1244.51,665.98 L1248.49,666.77 L1252.48,666.43 L1256.46,666.2 L1260.44,666 L1264.42,666.25 L1268.41,666.04 L1272.39,666.51 L1276.37,665.86 L1280.35,665.9 L1284.34,666.46 L1288.32,666.76 L1292.3,666.03 L1296.28,666.18 L1300.26,666 L1304.25,665.95 L1308.23,666.88 L1312.21,666.16 L1316.19,666.39 L1320.18,666.91 L1324.16,666.8 L1328.14,667.03 L1332.12,666.69 L1336.11,666.74 L1340.09,666.99 L1344.07,666.96 L1348.05,666.25 L1352.04,665.91 L1356.02,666.62 L1360,666.79 L1363.98,666.42 L1367.96,666.65 L1371.95,666.76 L1375.93,665.88 L1379.91,666.76 L1383.89,665.88 L1387.88,667 L1391.86,666.31 L1395.84,666.81 L1399.82,666.65 L1403.81,666.63 L1407.79,666.13 L1411.77,666.01 L1415.75,665.84 L1419.74,666.49 L1423.72,666.9 L1427.7,665.87 L1431.68,666.1 L1435.66,666.92 L1439.65,666.37 L1443.63,666.14 L1447.61,666.73 L1451.59,666.57 L1455.58,666.95 L1459.56,666.3 L1463.54,665.87 L1467.52,666.65 L1471.51,666.7 L1475.49,667.02 L1479.47,666.11 L1483.45,665.89 L1487.44,666.16 L1491.42,666.07 L1495.4,666.87 L1499.38,665.9 L1503.36,666.85 L1507.35,666.47 L1511.33,666.41 L1515.31,666.54 L1519.29,666.37 L1523.28,666.9 L1527.26,666.91 L1531.24,666.43 L1535.22,666.17 L1539.21,666.52 L1543.19,666.12 L1547.17,666.88 L1551.15,666.34 L1555.14,666.79 L1559.12,666.84 L1563.1,666.63 L1567.08,666.41 L1571.06,666.24 L1575.05,666.45 L1579.03,665.92 L1583.01,666.97 L1586.99,666.3 L1590.98,666.94 L1594.96,666.3 L1598.94,667.02 L1602.92,666.61 L1606.91,666.78 L1610.89,666.72 L1614.87,666.78 L1618.85,666.58 L1622.84,666.28 L1626.82,666.37 L1630.8,666.23 L1634.78,666.83 L1638.76,666.19 L1642.75,666.53 L1646.73,665.88 L1650.71,666.6 L1654.69,665.82 L1658.68,664.85 L1662.66,665.94 L1666.64,666.54 L1670.62,666.83 L1674.61,665.5 L1678.59,666.55 L1682.57,666.34 L1686.55,665.66 L1690.54,666.82 L1694.52,666.06 L1698.5,665.86 L1698.5,673.5 L344.5,673.5 Z" fill="rgba(110,208,224,0.12)"/>
<path d="M344.5,664.33 L348.48,663.73 L352.46,664.61 L356.45,664.02 L360.43,665.17 L364.41,665.57 L368.39,665.85 L372.38,665.51 L376.36,664.02 L380.34,665.21 L384.32,665.83 L388.31,665.83 L392.29,665.83 L396.27,665.96 L400.25,665.55 L404.24,665.43 L408.22,665.23 L412.2,665.37 L416.18,665.91 L420.16,665.74 L424.15,664.1 L428.13,664.02 L432.11,663.74 L436.09,663.71 L440.08,665.69 L444.06,662.89 L448.04,665.7 L452.02,665.05 L456.01,665.15 L459.99,663.62 L463.97,663.69 L467.95,665.59 L471.94,665.04 L475.92,665.54 L479.9,663.6 L483.88,663.6 L487.86,665.44 L491.85,663.47 L495.83,663.8 L499.81,664.25 L503.79,664.42 L507.78,665.53 L511.76,665.77 L515.74,665.33 L519.72,664.97 L523.71,665.47 L527.69,665.64 L531.67,665.07 L535.65,663.9 L539.64,664.5 L543.62,664.18 L547.6,666.02 L551.58,665.98 L555.56,663.37 L559.55,663.25 L563.53,663.46 L567.51,665.13 L571.49,665.29 L575.48,665.5 L579.46,665.13 L583.44,665.98 L587.42,665.11 L591.41,665.39 L595.39,665.26 L599.37,665.91 L603.35,665.13 L607.34,665.1 L611.32,665.49 L615.3,665.59 L619.28,665.85 L623.26,666.04 L627.25,665.47 L631.23,666.16 L635.21,665.48 L639.19,665.75 L643.18,664.97 L647.16,665.91 L651.14,665.71 L655.12,666.1 L659.11,665.32 L663.09,665.37 L667.07,663.51 L671.05,664.63 L675.04,663.47 L679.02,665.14 L683,665.44 L686.98,665.93 L690.96,665.91 L694.95,663.92 L698.93,663.87 L702.91,663.72 L706.89,663.33 L710.88,665.59 L714.86,665.65 L718.84,662.11 L722.82,665.15 L726.81,665.29 L730.79,665.36 L734.77,666.07 L738.75,665.76 L742.74,665.26 L746.72,665.56 L750.7,665.5 L754.68,665.28 L758.66,665.08 L762.65,665.61 L766.63,663.37 L770.61,665.75 L774.59,666 L778.58,665.1 L782.56,665.8 L786.54,660.17 L790.52,664.96 L794.51,665.63 L798.49,665.67 L802.47,666.05 L806.45,665.59 L810.44,665.29 L814.42,666.07 L818.4,663.67 L822.38,663.79 L826.36,663.62 L830.35,663.13 L834.33,664.94 L838.31,665.55 L842.29,665.89 L846.28,665.21 L850.26,665.95 L854.24,665.98 L858.22,666.12 L862.21,665.18 L866.19,665.05 L870.17,665.61 L874.15,665.46 L878.14,665.65 L882.12,665.32 L886.1,665.89 L890.08,665.5 L894.06,665.24 L898.05,665.25 L902.03,665.84 L906.01,665.77 L909.99,665.74 L913.98,663.04 L917.96,663.74 L921.94,663.86 L925.92,663.95 L929.91,665.01 L933.89,665.84 L937.87,664.21 L941.85,664.33 L945.84,665.77 L949.82,666.17 L953.8,666.05 L957.78,665.87 L961.76,663.69 L965.75,665.47 L969.73,663.18 L973.71,663.76 L977.69,662.86 L981.68,665.05 L985.66,665.32 L989.64,663.16 L993.62,663.15 L997.61,663.02 L1001.59,662.92 L1005.57,665.93 L1009.55,664.96 L1013.54,665.32 L1017.52,665.45 L1021.5,666.1 L1025.48,665.04 L1029.46,665.35 L1033.45,666 L1037.43,665.43 L1041.41,666.12 L1045.39,665.92 L1049.38,665.66 L1053.36,665.51 L1057.34,665.23 L1061.32,663.67 L1065.31,665.26 L1069.29,665.95 L1073.27,662.94 L1077.25,661.46 L1081.24,664.01 L1085.22,663.39 L1089.2,663.44 L1093.18,665.95 L1097.16,665.02 L1101.15,665.96 L1105.13,663.81 L1109.11,664.08 L1113.09,663.79 L1117.08,665.49 L1121.06,665.51 L1125.04,663.63 L1129.02,663.62 L1133.01,665.27 L1136.99,666.03 L1140.97,665.51 L1144.95,664.25 L1148.94,664.04 L1152.92,664.01 L1156.9,663.28 L1160.88,665.42 L1164.86,664.39 L1168.85,665.44 L1172.83,665 L1176.81,665.19 L1180.79,666.11 L1184.78,665.16 L1188.76,666.04 L1192.74,663.56 L1196.72,663.2 L1200.71,665.47 L1204.69,665.66 L1208.67,665.42 L1212.65,665.67 L1216.64,663.12 L1220.62,663.29 L1224.6,657.59 L1228.58,665.03 L1232.56,666.1 L1236.55,664 L1240.53,665.32 L1244.51,664.95 L1248.49,665.75 L1252.48,656.95 L1256.46,665.15 L1260.44,663.37 L1264.42,665.4 L1268.41,665.27 L1272.39,665.46 L1276.37,665.1 L1280.35,664.96 L1284.34,665.42 L1288.32,664.39 L1292.3,663.67 L1296.28,663.82 L1300.26,663.64 L1304.25,663.69 L1308.23,666.14 L1312.21,665.19 L1316.19,665.36 L1320.18,665.8 L1324.16,665.75 L1328.14,665.9 L1332.12,665.63 L1336.11,665.79 L1340.09,666.01 L1344.07,665.88 L1348.05,663.34 L1352.04,665.17 L1356.02,665.62 L1360,665.77 L1363.98,665.3 L1367.96,665.83 L1371.95,665.92 L1375.93,665.08 L1379.91,662.11 L1383.89,663.57 L1387.88,664.69 L1391.86,665.3 L1395.84,665.79 L1399.82,663.49 L1403.81,665.53 L1407.79,663.17 L1411.77,663.05 L1415.75,662.88 L1419.74,663.53 L1423.72,664.3 L1427.7,663.25 L1431.68,665.05 L1435.66,666.12 L1439.65,665.52 L1443.63,665.16 L1447.61,665.84 L1451.59,665.52 L1455.58,666.2 L1459.56,665.44 L1463.54,662.92 L1467.52,663.69 L1471.51,663.74 L1475.49,664.07 L1479.47,665.13 L1483.45,663.53 L1487.44,665.12 L1491.42,665.02 L1495.4,666.14 L1499.38,664.9 L1503.36,665.77 L1507.35,665.51 L1511.33,665.62 L1515.31,665.62 L1519.29,665.47 L1523.28,664.56 L1527.26,664.57 L1531.24,664.09 L1535.22,665.35 L1539.21,665.53 L1543.19,665.13 L1547.17,666.04 L1551.15,665.32 L1555.14,665.96 L1559.12,665.88 L1563.1,665.51 L1567.08,665.36 L1571.06,665.47 L1575.05,665.39 L1579.03,663.44 L1583.01,664.48 L1586.99,665.5 L1590.98,666.14 L1594.96,665.31 L1598.94,666.01 L1602.92,664.21 L1606.91,664.39 L1610.89,665.73 L1614.87,664.13 L1618.85,663.92 L1622.84,663.25 L1626.82,663.34 L1630.8,663.88 L1634.78,664.48 L1638.76,663.84 L1642.75,665.68 L1646.73,664.92 L1650.71,665.52 L1654.69,665.02 L1658.68,655.01 L1662.66,664.88 L1666.64,665.63 L1670.62,664.44 L1674.61,662.92 L1678.59,664.15 L1682.57,665.31 L1686.55,661.14 L1690.54,664.09 L1694.52,663.32 L1698.5,665.08" fill="none" stroke="#e24d42" stroke-width="1"/>
<path d="M344.5,666.64 L348.48,666.04 L352.46,666.91 L356.45,666.32 L360.43,665.93 L364.41,666.52 L368.39,666.96 L372.38,666.27 L376.36,666.32 L380.34,665.99 L384.32,666.89 L388.31,666.81 L392.29,666.58 L396.27,666.96 L400.25,666.51 L404.24,666.48 L408.22,666.18 L412.2,666.39 L416.18,666.68 L420.16,666.52 L424.15,666.44 L428.13,666.35 L432.11,666.07 L436.09,666.04 L440.08,666.62 L444.06,666.06 L448.04,666.46 L452.02,666.18 L456.01,666.03 L459.99,666.22 L463.97,666.29 L467.95,666.43 L471.94,666.14 L475.92,666.43 L479.9,666.69 L483.88,666.69 L487.86,666.53 L491.85,665.87 L495.83,666.23 L499.81,666.69 L503.79,666.85 L507.78,666.38 L511.76,666.88 L515.74,666.24 L519.72,665.97 L523.71,666.35 L527.69,666.45 L531.67,665.84 L535.65,666.3 L539.64,666.91 L543.62,666.59 L547.6,667 L551.58,666.85 L555.56,666.59 L559.55,666.46 L563.53,666.44 L567.51,666.13 L571.49,666.4 L575.48,666.59 L579.46,666.11 L583.44,666.92 L587.42,665.93 L591.41,666.37 L595.39,666.29 L599.37,666.79 L603.35,666.06 L607.34,666.14 L611.32,666.46 L615.3,666.61 L619.28,666.61 L623.26,666.91 L627.25,666.44 L631.23,667.03 L635.21,666.25 L639.19,666.56 L643.18,665.95 L647.16,666.92 L651.14,666.47 L655.12,666.84 L659.11,666.31 L663.09,666.29 L667.07,665.89 L671.05,667.01 L675.04,665.85 L679.02,666.24 L683,666.5 L686.98,666.77 L690.96,666.74 L694.95,666.52 L698.93,666.47 L702.91,666.32 L706.89,665.93 L710.88,666.52 L714.86,666.39 L718.84,666.5 L722.82,666.06 L726.81,666.15 L730.79,666.4 L734.77,666.9 L738.75,666.69 L742.74,666.35 L746.72,666.49 L750.7,666.41 L754.68,666.38 L758.66,666.18 L762.65,666.71 L766.63,666.01 L770.61,666.65 L774.59,666.77 L778.58,666.09 L782.56,666.59 L786.54,666.46 L790.52,665.96 L794.51,666.76 L798.49,666.54 L802.47,666.92 L806.45,666.47 L810.44,666.4 L814.42,666.89 L818.4,665.97 L822.38,666.09 L826.36,666.7 L830.35,666.21 L834.33,665.88 L838.31,666.41 L842.29,666.69 L846.28,665.95 L850.26,666.92 L854.24,666.76 L858.22,667.01 L862.21,665.92 L866.19,666.17 L870.17,666.71 L874.15,666.27 L878.14,666.49 L882.12,666.06 L886.1,667.01 L890.08,666.41 L894.06,666.23 L898.05,666.37 L902.03,666.66 L906.01,666.79 L909.99,666.86 L913.98,666.02 L917.96,666.72 L921.94,666.83 L925.92,666.93 L929.91,666.01 L933.89,666.69 L937.87,666.47 L941.85,666.59 L945.84,666.63 L949.82,666.99 L953.8,666.81 L957.78,666.69 L961.76,666.09 L965.75,666.32 L969.73,666.27 L973.71,666.84 L977.69,665.95 L981.68,666.08 L985.66,666.16 L989.64,666.28 L993.62,666.27 L997.61,666.14 L1001.59,666.05 L1005.57,666.86 L1009.55,666.02 L1013.54,666.32 L1017.52,666.19 L1021.5,666.87 L1025.48,666.02 L1029.46,666.27 L1033.45,667.02 L1037.43,666.42 L1041.41,666.95 L1045.39,666.94 L1049.38,666.78 L1053.36,666.43 L1057.34,666.2 L1061.32,666.25 L1065.31,666.24 L1069.29,666.87 L1073.27,665.85 L1077.25,666.68 L1081.24,666.46 L1085.22,665.85 L1089.2,665.9 L1093.18,667.01 L1097.16,665.86 L1101.15,666.77 L1105.13,666.33 L1109.11,666.59 L1113.09,666.3 L1117.08,666.26 L1121.06,666.59 L1125.04,666.55 L1129.02,666.54 L1133.01,666.15 L1136.99,666.88 L1140.97,666.62 L1144.95,666.79 L1148.94,666.58 L1152.92,666.55 L1156.9,665.82 L1160.88,666.32 L1164.86,666.7 L1168.85,666.23 L1172.83,665.85 L1176.81,666.09 L1180.79,666.99 L1184.78,665.97 L1188.76,666.93 L1192.74,666.28 L1196.72,665.93 L1200.71,666.36 L1204.69,666.69 L1208.67,666.24 L1212.65,666.44 L1216.64,666.25 L1220.62,666.43 L1224.6,666.76 L1228.58,665.93 L1232.56,666.86 L1236.55,666.61 L1240.53,666.05 L1244.51,665.98 L1248.49,666.77 L1252.48,666.43 L1256.46,666.2 L1260.44,666 L1264.42,666.25 L1268.41,666.04 L1272.39,666.51 L1276.37,665.86 L1280.35,665.9 L1284.34,666.46 L1288.32,666.76 L1292.3,666.03 L1296.28,666.18 L1300.26,666 L1304.25,665.95 L1308.23,666.88 L1312.21,666.16 L1316.19,666.39 L1320.18,666.91 L1324.16,666.8 L1328.14,667.03 L1332.12,666.69 L1336.11,666.74 L1340.09,666.99 L1344.07,666.96 L1348.05,666.25 L1352.04,665.91 L1356.02,666.62 L1360,666.79 L1363.98,666.42 L1367.96,666.65 L1371.95,666.76 L1375.93,665.88 L1379.91,666.76 L1383.89,665.88 L1387.88,667 L1391.86,666.31 L1395.84,666.81 L1399.82,666.65 L1403.81,666.63 L1407.79,666.13 L1411.77,666.01 L1415.75,665.84 L1419.74,666.49 L1423.72,666.9 L1427.7,665.87 L1431.68,666.1 L1435.66,666.92 L1439.65,666.37 L1443.63,666.14 L1447.61,666.73 L1451.59,666.57 L1455.58,666.95 L1459.56,666.3 L1463.54,665.87 L1467.52,666.65 L1471.51,666.7 L1475.49,667.02 L1479.47,666.11 L1483.45,665.89 L1487.44,666.16 L1491.42,666.07 L1495.4,666.87 L1499.38,665.9 L1503.36,666.85 L1507.35,666.47 L1511.33,666.41 L1515.31,666.54 L1519.29,666.37 L1523.28,666.9 L1527.26,666.91 L1531.24,666.43 L1535.22,666.17 L1539.21,666.52 L1543.19,666.12 L1547.17,666.88 L1551.15,666.34 L1555.14,666.79 L1559.12,666.84 L1563.1,666.63 L1567.08,666.41 L1571.06,666.24 L1575.05,666.45 L1579.03,665.92 L1583.01,666.97 L1586.99,666.3 L1590.98,666.94 L1594.96,666.3 L1598.94,667.02 L1602.92,666.61 L1606.91,666.78 L1610.89,666.72 L1614.87,666.78 L1618.85,666.58 L1622.84,666.28 L1626.82,666.37 L1630.8,666.23 L1634.78,666.83 L1638.76,666.19 L1642.75,666.53 L1646.73,665.88 L1650.71,666.6 L1654.69,665.82 L1658.68,664.85 L1662.66,665.94 L1666.64,666.54 L1670.62,666.83 L1674.61,665.5 L1678.59,666.55 L1682.57,666.34 L1686.55,665.66 L1690.54,666.82 L1694.52,666.06 L1698.5,665.86" fill="none" stroke="#6ed0e0" stroke-width="1"/>
<text x="335" y="516.04" text-anchor="end" font-size="11" fill="#d8d9da" font-weight="normal" >100%</text>
<text x="335" y="556.29" text-anchor="end" font-size="11" fill="#d8d9da" font-weight="normal" >75%</text>
<text x="335" y="596.54" text-anchor="end" font-size="11" fill="#d8d9da" font-weight="normal" >50%</text>
<text x="335" y="636.79" text-anchor="end" font-size="11" fill="#d8d9da" font-weight="normal" >25%</text>
<text x="335" y="677.04" text-anchor="end" font-size="11" fill="#d8d9da" font-weight="normal" >0%</text>
<text x="344.5" y="691.24" text-anchor="middle" font-size="11" fill="#d8d9da" font-weight="normal" >15:38</text>
<text x="435.5" y="691.24" text-anchor="middle" font-size="11" fill="#d8d9da" font-weight="normal" >15:40</text>
<text x="526.5" y="691.24" text-anchor="middle" font-size="11" fill="#d8d9da" font-weight="normal" >15:42</text>
<text x="617.5" y="691.24" text-anchor="middle" font-size="11" fill="#d8d9da" font-weight="normal" >15:44</text>
<text x="708.5" y="691.24" text-anchor="middle" font-size="11" fill="#d8d9da" font-weight="normal" >15:46</text>
<text x="798.5" y="691.24" text-anchor="middle" font-size="11" fill="#d8d9da" font-weight="normal" >15:48</text>
<text x="889.5" y="691.24" text-anchor="middle" font-size="11" fill="#d8d9da" font-weight="normal" >15:50</text>
<text x="980.5" y="691.24" text-anchor="middle" font-size="11" fill="#d8d9da" font-weight="normal" >15:52</text>
<text x="1071.5" y="691.24" text-anchor="middle" font-size="11" fill="#d8d9da" font-weight="normal" >15:54</text>
<text x="1162.5" y="691.24" text-anchor="middle" font-size="11" fill="#d8d9da" font-weight="normal" >15:56</text>
<text x="1253.5" y="691.24" text-anchor="middle" font-size="11" fill="#d8d9da" font-weight="normal" >15:58</text>
<text x="1344.5" y="691.24" text-anchor="middle" font-size="11" fill="#d8d9da" font-weight="normal" >16:00</text>
<text x="1435.5" y="691.24" text-anchor="middle" font-size="11" fill="#d8d9da" font-weight="normal" >16:02</text>
<text x="1526.5" y="691.24" text-anchor="middle" font-size="11" fill="#d8d9da" font-weight="normal" >16:04</text>
<text x="1617.5" y="691.24" text-anchor="middle" font-size="11" fill="#d8d9da" font-weight="normal" >16:06</text>
</svg>
<div class="legend" style="left:34px;top:223.7px"><span class="li" style="letter-spacing:0.19px"><i style="background:#e24d42"></i>Max. Utilization</span><span class="li" style="letter-spacing:0.17px"><i style="background:#6ed0e0"></i>Average Utilization</span></div>
</div>
<div class="panel " style="left:6px;top:738px;width:278px;height:250px">
<div class="ptitle" style="top:6px;letter-spacing:0.7px">Current Used Heap</div>
<svg class="chart" width="278" height="250" viewBox="6 738 278 250" font-family='"Liberation Sans", Arial, sans-serif'>
<path d="M35.26,950.75 A115.7,115.7 0 1 1 255.34,950.75 L221.38,939.72 A80.0,80.0 0 1 0 69.22,939.72 Z" fill="#262626"/>
<path d="M35.26,950.75 A115.7,115.7 0 0 1 243.99,854.61 L213.54,873.24 A80.0,80.0 0 0 0 69.22,939.72 Z" fill="#32a82e"/>
<path d="M27.46,953.29 A123.9,123.9 0 0 1 255.34,858.06 L249.48,861.09 A117.3,117.3 0 0 0 33.74,951.25 Z" fill="#32a82e"/>
<path d="M255.34,858.06 A123.9,123.9 0 0 1 269.17,912.35 L262.57,912.49 A117.3,117.3 0 0 0 249.48,861.09 Z" fill="#d67a2a"/>
<path d="M269.17,912.35 A123.9,123.9 0 0 1 263.14,953.29 L256.86,951.25 A117.3,117.3 0 0 0 262.57,912.49 Z" fill="#e0343a"/>
<text transform="translate(144.6,935) scale(0.944,1)" x="0" y="0" text-anchor="middle" font-size="36.6" font-weight="bold" fill="#d8d9da">102 MB</text>
</svg>
</div>
<div class="panel " style="left:295px;top:738px;width:711px;height:250px">
<div class="ptitle" style="top:6px;letter-spacing:0.85px">Memory Utilization</div>
<svg class="chart" width="711" height="250" viewBox="295 738 711 250" font-family='"Liberation Sans", Arial, sans-serif'>
<rect x="351" y="773" width="629" height="1" fill="#444243"/>
<rect x="351" y="826" width="629" height="1" fill="#444243"/>
<rect x="351" y="880" width="629" height="1" fill="#444243"/>
<rect x="351" y="934" width="629" height="1" fill="#444243"/>
<rect x="395" y="773" width="1" height="161" fill="#444243"/>
<rect x="499" y="773" width="1" height="161" fill="#444243"/>
<rect x="604" y="773" width="1" height="161" fill="#444243"/>
<rect x="709" y="773" width="1" height="161" fill="#444243"/>
<rect x="814" y="773" width="1" height="161" fill="#444243"/>
<rect x="919" y="773" width="1" height="161" fill="#444243"/>
<rect x="351.6" y="776.2" width="626.4" height="158.7" fill="rgba(234,184,57,0.1)"/>
<path d="M351.6,842.34 L360.13,812.05 L363.45,841.91 L371.97,810.97 L375.29,842.34 L383.82,811.72 L387.14,841.69 L395.66,815.28 L398.98,845.46 L407.51,814.96 L410.83,843.85 L419.35,813.12 L422.67,846.54 L431.2,809.89 L434.52,841.15 L443.04,816.9 L446.36,843.31 L454.89,812.59 L458.21,844.39 L466.73,811.51 L470.05,842.77 L478.58,812.05 L481.9,846 L490.42,809.35 L493.74,843.31 L502.27,814.74 L505.59,842.23 L514.11,812.59 L517.43,844.93 L525.96,810.97 L529.28,843.85 L537.8,813.66 L541.12,841.69 L549.65,812.05 L552.97,845.46 L561.49,816.36 L564.81,842.77 L573.34,810.43 L576.66,844.39 L585.18,814.2 L588.5,843.85 L597.03,815.82 L600.35,846 L608.87,812.59 L612.19,842.23 L620.72,810.43 L624.04,843.31 L632.56,813.66 L635.88,844.93 L644.41,808.81 L647.73,842.34 L656.25,813.12 L659.57,841.91 L668.1,814.74 L671.42,842.34 L679.94,811.51 L683.26,841.69 L691.79,812.05 L695.11,845.46 L703.63,810.97 L706.95,843.85 L715.48,811.72 L718.8,846.54 L727.32,815.28 L730.64,841.15 L739.17,814.96 L742.49,843.31 L751.01,813.12 L754.33,844.39 L762.86,809.89 L766.18,842.77 L774.7,816.9 L778.02,846 L786.55,812.59 L789.87,843.31 L798.39,811.51 L801.71,842.23 L810.24,812.05 L813.56,844.93 L822.08,809.35 L825.4,843.85 L833.93,814.74 L837.25,841.69 L845.77,812.59 L849.09,845.46 L857.62,810.97 L860.94,842.77 L869.46,813.66 L872.78,844.39 L881.31,812.05 L884.63,843.85 L893.15,816.36 L896.47,846 L905,810.43 L908.32,842.23 L916.84,814.2 L920.16,843.31 L928.69,815.82 L932.01,844.93 L940.53,812.59 L943.85,842.34 L952.38,810.43 L955.7,841.91 L964.22,813.66 L967.54,842.34 L976.07,808.81 L978.0,934.9 L351.6,934.9 Z" fill="rgba(126,178,109,0.1)"/>
<path d="M351.6,826.7 L357,829 L360,829.8 L362.5,845.7 L365,848 L390.5,848.5 L392,841 L396,840.5 L407.5,841.5 L413,865.5 L415,866 L417,865.4 L430,866.2 L460,868 L493.5,870.2 L495.5,863 L545,865.8 L547.5,863.6 L598,866.4 L600.5,862.3 L617,862.3 L621,864.3 L640,865.7 L652,865.7 L653.4,863 L666.7,862.8 L684.1,864.9 L689.4,880.1 L704.1,882.8 L708.9,891.1 L721.5,892.2 L726,896.2 L757,897.8 L760.8,906.6 L770.9,907.7 L776.3,910.6 L797.6,912.2 L813.7,912.7 L871.1,915.1 L874.6,913.5 L904.5,915.1 L908,911.4 L919.2,912.2 L925.9,913.8 L943.2,915.4 L945.9,913.5 L972.6,912.7 L976.1,899.6 L978,902.3 L978.0,934.9 L351.6,934.9 Z" fill="rgba(110,208,224,0.1)"/>
<path d="M351.6,842.34 L360.13,812.05 L363.45,841.91 L371.97,810.97 L375.29,842.34 L383.82,811.72 L387.14,841.69 L395.66,815.28 L398.98,845.46 L407.51,814.96 L410.83,843.85 L419.35,813.12 L422.67,846.54 L431.2,809.89 L434.52,841.15 L443.04,816.9 L446.36,843.31 L454.89,812.59 L458.21,844.39 L466.73,811.51 L470.05,842.77 L478.58,812.05 L481.9,846 L490.42,809.35 L493.74,843.31 L502.27,814.74 L505.59,842.23 L514.11,812.59 L517.43,844.93 L525.96,810.97 L529.28,843.85 L537.8,813.66 L541.12,841.69 L549.65,812.05 L552.97,845.46 L561.49,816.36 L564.81,842.77 L573.34,810.43 L576.66,844.39 L585.18,814.2 L588.5,843.85 L597.03,815.82 L600.35,846 L608.87,812.59 L612.19,842.23 L620.72,810.43 L624.04,843.31 L632.56,813.66 L635.88,844.93 L644.41,808.81 L647.73,842.34 L656.25,813.12 L659.57,841.91 L668.1,814.74 L671.42,842.34 L679.94,811.51 L683.26,841.69 L691.79,812.05 L695.11,845.46 L703.63,810.97 L706.95,843.85 L715.48,811.72 L718.8,846.54 L727.32,815.28 L730.64,841.15 L739.17,814.96 L742.49,843.31 L751.01,813.12 L754.33,844.39 L762.86,809.89 L766.18,842.77 L774.7,816.9 L778.02,846 L786.55,812.59 L789.87,843.31 L798.39,811.51 L801.71,842.23 L810.24,812.05 L813.56,844.93 L822.08,809.35 L825.4,843.85 L833.93,814.74 L837.25,841.69 L845.77,812.59 L849.09,845.46 L857.62,810.97 L860.94,842.77 L869.46,813.66 L872.78,844.39 L881.31,812.05 L884.63,843.85 L893.15,816.36 L896.47,846 L905,810.43 L908.32,842.23 L916.84,814.2 L920.16,843.31 L928.69,815.82 L932.01,844.93 L940.53,812.59 L943.85,842.34 L952.38,810.43 L955.7,841.91 L964.22,813.66 L967.54,842.34 L976.07,808.81" fill="none" stroke="#7eb26d" stroke-width="1" stroke-linejoin="round"/>
<path d="M351.6,776.5 L978.0,776.5" stroke="#eab839" stroke-width="1.1"/>
<path d="M351.6,826.7 L357,829 L360,829.8 L362.5,845.7 L365,848 L390.5,848.5 L392,841 L396,840.5 L407.5,841.5 L413,865.5 L415,866 L417,865.4 L430,866.2 L460,868 L493.5,870.2 L495.5,863 L545,865.8 L547.5,863.6 L598,866.4 L600.5,862.3 L617,862.3 L621,864.3 L640,865.7 L652,865.7 L653.4,863 L666.7,862.8 L684.1,864.9 L689.4,880.1 L704.1,882.8 L708.9,891.1 L721.5,892.2 L726,896.2 L757,897.8 L760.8,906.6 L770.9,907.7 L776.3,910.6 L797.6,912.2 L813.7,912.7 L871.1,915.1 L874.6,913.5 L904.5,915.1 L908,911.4 L919.2,912.2 L925.9,913.8 L943.2,915.4 L945.9,913.5 L972.6,912.7 L976.1,899.6 L978,902.3" fill="none" stroke="#6ed0e0" stroke-width="1.1" stroke-linejoin="round"/>
<text x="346" y="777.04" text-anchor="end" font-size="11" fill="#d8d9da" font-weight="normal" >150 MB</text>
<text x="346" y="830.71" text-anchor="end" font-size="11" fill="#d8d9da" font-weight="normal" >100 MB</text>
<text x="346" y="884.38" text-anchor="end" font-size="11" fill="#d8d9da" font-weight="normal" >50 MB</text>
<text x="346" y="938.05" text-anchor="end" font-size="11" fill="#d8d9da" font-weight="normal" >0 B</text>
<text x="395.5" y="952.44" text-anchor="middle" font-size="11" fill="#d8d9da" font-weight="normal" >15:40</text>
<text x="499.5" y="952.44" text-anchor="middle" font-size="11" fill="#d8d9da" font-weight="normal" >15:45</text>
<text x="604.5" y="952.44" text-anchor="middle" font-size="11" fill="#d8d9da" font-weight="normal" >15:50</text>
<text x="709.5" y="952.44" text-anchor="middle" font-size="11" fill="#d8d9da" font-weight="normal" >15:55</text>
<text x="814.5" y="952.44" text-anchor="middle" font-size="11" fill="#d8d9da" font-weight="normal" >16:00</text>
<text x="919.5" y="952.44" text-anchor="middle" font-size="11" fill="#d8d9da" font-weight="normal" >16:05</text>
</svg>
<div class="legend" style="left:34px;top:224px"><span class="li" style="letter-spacing:0.05px"><i style="background:#7eb26d"></i>Used Heap Memory Size</span><span class="li" style="letter-spacing:0.16px"><i style="background:#eab839"></i>Comitted Heap Memory Size</span><span class="li" style="letter-spacing:0.09px"><i style="background:#6ed0e0"></i>Free Physical Memory</span></div>
</div>
<div class="panel " style="left:1018px;top:738px;width:711px;height:250px">
<div class="ptitle" style="top:6px;letter-spacing:0.5px">Thread Count</div>
<svg class="chart" width="711" height="250" viewBox="1018 738 711 250" font-family='"Liberation Sans", Arial, sans-serif'>
<rect x="1054" y="773" width="650" height="1" fill="#444243"/>
<rect x="1054" y="799" width="650" height="1" fill="#444243"/>
<rect x="1054" y="826" width="650" height="1" fill="#444243"/>
<rect x="1054" y="853" width="650" height="1" fill="#444243"/>
<rect x="1054" y="880" width="650" height="1" fill="#444243"/>
<rect x="1054" y="907" width="650" height="1" fill="#444243"/>
<rect x="1054" y="934" width="650" height="1" fill="#444243"/>
<rect x="1099" y="773" width="1" height="161" fill="#444243"/>
<rect x="1207" y="773" width="1" height="161" fill="#444243"/>
<rect x="1315" y="773" width="1" height="161" fill="#444243"/>
<rect x="1424" y="773" width="1" height="161" fill="#444243"/>
<rect x="1532" y="773" width="1" height="161" fill="#444243"/>
<rect x="1640" y="773" width="1" height="161" fill="#444243"/>
<rect x="1054.8" y="858.9" width="645.2" height="76" fill="rgba(126,178,109,0.1)"/>
<rect x="1054.8" y="907.45" width="645.2" height="27.45" fill="rgba(234,184,57,0.1)"/>
<rect x="1054.8" y="797.0" width="645.2" height="137.9" fill="rgba(110,208,224,0.1)"/>
<path d="M1054.8,858.9 L1700.0,858.9" stroke="#7eb26d" stroke-width="1.15"/>
<path d="M1054.8,907.45 L1700.0,907.45" stroke="#eab839" stroke-width="1.15"/>
<path d="M1054.8,797.0 L1700.0,797.0" stroke="#6ed0e0" stroke-width="1.15"/>
<text x="1048.5" y="777.04" text-anchor="end" font-size="11" fill="#d8d9da" font-weight="normal" >120</text>
<text x="1048.5" y="803.87" text-anchor="end" font-size="11" fill="#d8d9da" font-weight="normal" >100</text>
<text x="1048.5" y="830.7" text-anchor="end" font-size="11" fill="#d8d9da" font-weight="normal" >80</text>
<text x="1048.5" y="857.53" text-anchor="end" font-size="11" fill="#d8d9da" font-weight="normal" >60</text>
<text x="1048.5" y="884.36" text-anchor="end" font-size="11" fill="#d8d9da" font-weight="normal" >40</text>
<text x="1048.5" y="911.19" text-anchor="end" font-size="11" fill="#d8d9da" font-weight="normal" >20</text>
<text x="1048.5" y="938.02" text-anchor="end" font-size="11" fill="#d8d9da" font-weight="normal" >0</text>
<text x="1099.5" y="952.44" text-anchor="middle" font-size="11" fill="#d8d9da" font-weight="normal" >15:40</text>
<text x="1207.5" y="952.44" text-anchor="middle" font-size="11" fill="#d8d9da" font-weight="normal" >15:45</text>
<text x="1315.5" y="952.44" text-anchor="middle" font-size="11" fill="#d8d9da" font-weight="normal" >15:50</text>
<text x="1424.5" y="952.44" text-anchor="middle" font-size="11" fill="#d8d9da" font-weight="normal" >15:55</text>
<text x="1532.5" y="952.44" text-anchor="middle" font-size="11" fill="#d8d9da" font-weight="normal" >16:00</text>
<text x="1640.5" y="952.44" text-anchor="middle" font-size="11" fill="#d8d9da" font-weight="normal" >16:05</text>
</svg>
<div class="legend" style="left:34px;top:224px"><span class="li" style="letter-spacing:0.09px"><i style="background:#7eb26d"></i>Live Thread Count</span><span class="li" style="letter-spacing:0.18px"><i style="background:#eab839"></i>Daemon Thread Count</span><span class="li" style="letter-spacing:0.08px"><i style="background:#6ed0e0"></i>Peak Thread Count</span></div>
</div>
</body></html>
